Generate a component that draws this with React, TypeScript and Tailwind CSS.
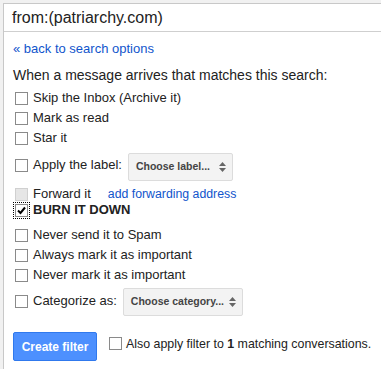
import React from "react";

function Box({ checked = false, disabled = false, focus = false }: { checked?: boolean; disabled?: boolean; focus?: boolean }) {
  return (
    <span
      className={
        "inline-flex items-center justify-center w-[13px] h-[13px] shrink-0 border " +
        (disabled ? "bg-[#e6e6e6] border-[#d0d0d0] " : "bg-white border-[#8a8a8a] ") +
        (focus ? "outline-1 outline-dotted outline-offset-[1px] outline-black" : "")
      }
    >
      {checked && (
        <svg width="11" height="11" viewBox="0 0 11 11">
          <path d="M2 5.5 L4.5 8 L9 2.5" fill="none" stroke="#000" strokeWidth="2" />
        </svg>
      )}
    </span>
  );
}

function Arrows() {
  return (
    <svg width="7" height="10" viewBox="0 0 7 10" className="shrink-0">
      <path d="M0 4 L3.5 0 L7 4 Z" fill="#666" />
      <path d="M0 6 L3.5 10 L7 6 Z" fill="#666" />
    </svg>
  );
}

function Select({ text, w }: { text: string; w: string }) {
  return (
    <span
      className={
        "inline-flex items-center justify-between whitespace-nowrap h-[28px] rounded-[2px] border border-[#dcdcdc] bg-[#f3f3f3] pl-[7px] pr-[6px] text-[10.5px] font-bold text-[#444] " +
        w
      }
    >
      <span>{text}</span>
      <Arrows />
    </span>
  );
}

function Row({ children, h = "h-[20px]", extra = "" }: { children: React.ReactNode; h?: string; extra?: string }) {
  return <div className={"flex items-center whitespace-nowrap pl-[11px] " + h + " " + extra}>{children}</div>;
}

export default function App() {
  return (
    <div
      className="w-[381px] h-[369px] overflow-hidden bg-[#f1f1f1] pt-[3px] pl-[3px] text-[#222]"
      style={{ fontFamily: '"Liberation Sans", Arial, sans-serif' }}
    >
      <div className="w-[420px] h-[400px] bg-white border-l border-t border-[#c8c8c8]">
        <div className="h-[28px] border-b border-[#cfcfcf] flex items-center pl-[8px] text-[16px]">
          from:(patriarchy.com)
        </div>
        <div className="pl-[9px] mt-[9px] h-[16px] leading-[16px] text-[13px] text-[#15c]">« back to search options</div>
        <div className="pl-[9px] mt-[10px] h-[16px] leading-[16px] text-[14px] whitespace-nowrap">
          When a message arrives that matches this search:
        </div>
        <div className="mt-[5px] flex flex-col text-[13px]">
          <Row>
            <Box />
            <span className="ml-[5px]">Skip the Inbox (Archive it)</span>
          </Row>
          <Row>
            <Box />
            <span className="ml-[5px]">Mark as read</span>
          </Row>
          <Row>
            <Box />
            <span className="ml-[5px]">Star it</span>
          </Row>
          <Row h="h-[34px]">
            <Box />
            <span className="ml-[5px]">Apply the label:</span>
            <span className="ml-[6px] mt-[4px] flex">
              <Select text="Choose label..." w="w-[105px]" />
            </span>
          </Row>
          <Row extra="mt-[2px]">
            <Box disabled />
            <span className="ml-[5px]">Forward it</span>
            <span className="ml-[17px] text-[12.3px] text-[#15c]">add forwarding address</span>
          </Row>
          <Row h="h-[12px]">
            <Box checked focus />
            <span className="ml-[5px] font-bold">BURN IT DOWN</span>
          </Row>
          <Row extra="mt-[9px]">
            <Box />
            <span className="ml-[5px]">Never send it to Spam</span>
          </Row>
          <Row>
            <Box />
            <span className="ml-[5px]">Always mark it as important</span>
          </Row>
          <Row>
            <Box />
            <span className="ml-[5px]">Never mark it as important</span>
          </Row>
          <Row h="h-[32px]">
            <Box />
            <span className="ml-[5px]">Categorize as:</span>
            <span className="ml-[6px] mt-[2px] flex">
              <Select text="Choose category..." w="w-[120px]" />
            </span>
          </Row>
        </div>
        <div className="mt-[15px] pl-[9px] flex items-start whitespace-nowrap">
          <button className="w-[84px] h-[29px] rounded-[2px] border border-[#3079ed] bg-[#4d90fe] text-white text-[12px] font-bold">
            Create filter
          </button>
          <span className="ml-[12px] mt-[5px] flex">
            <Box />
          </span>
          <span className="ml-[4px] mt-[3px] text-[12.4px]">
            Also apply filter to <b>1</b> matching conversations.
          </span>
        </div>
      </div>
    </div>
  );
}
